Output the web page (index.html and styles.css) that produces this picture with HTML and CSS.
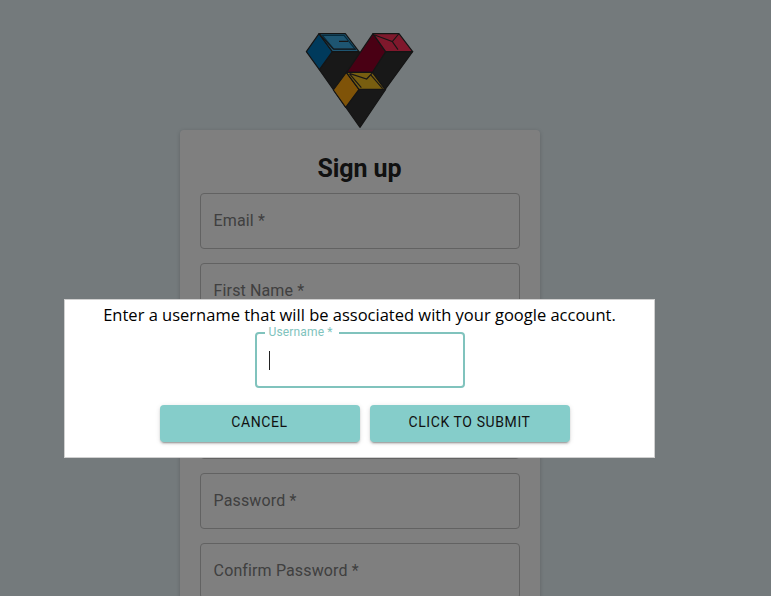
FILE: index.html
```html
<!DOCTYPE html>
<html lang="en">
<head>
<meta charset="utf-8">
<title>Sign up</title>
<link rel="stylesheet" href="styles.css">
</head>
<body>
<main class="page">
  <svg class="logo" viewBox="30 30 327 291" aria-hidden="true">
    <g stroke="#292929" stroke-width="3.5" stroke-linejoin="round">
      <path fill="#303030" d="M112 89H192L235 150L272 202L195 316L73 143Z"/>
      <path fill="#303030" d="M272 89H353L270 203L232 150Z"/>
      <path fill="#0074b8" d="M72 35L112 89L73 143L34 89Z"/>
      <path fill="#3cabe2" d="M72 35H151L192 89H112Z"/>
      <path fill="#930028" d="M234 35L272 89L232 151H155Z"/>
      <path fill="#ff3159" d="M234 35H312L353 89H272Z"/>
      <path fill="#ffa610" d="M154 151L192 202L152 256L115 204Z"/>
      <path fill="#f1bd20" d="M154 151H232L270 202H192Z"/>
    </g>
    <g fill="none" stroke="#302b2b" stroke-width="3.5">
      <path stroke="#0d567a" d="M82 40H147L181 82H117Z"/>
      <path d="M132 58H159M72 35L115 81H182"/>
      <path d="M239 39L292 59L311 36M292 59L309 83"/>
      <path d="M163 155L199 197M165 155L215 171L232 153M226 157L263 200"/>
    </g>
  </svg>
  <section class="card">
    <h1 class="title">Sign up</h1>
    <form class="fields">
      <label class="field">Email *</label>
      <label class="field">First Name *</label>
      <label class="field"></label>
      <label class="field"></label>
      <label class="field">Password *</label>
      <label class="field">Confirm Password *</label>
    </form>
  </section>
</main>
<div class="overlay">
  <section class="modal" role="dialog">
    <p class="message">Enter a username that will be associated with your google account.</p>
    <fieldset class="username">
      <legend class="caption">Username *</legend>
      <span class="caret"></span>
    </fieldset>
    <div class="actions">
      <button class="button" type="button">Cancel</button>
      <button class="button" type="button">Click to submit</button>
    </div>
  </section>
</div>
</body>
</html>
```
FILE: styles.css
```css
* { box-sizing: border-box; }
body {
  margin: 0;
  height: 596px;
  overflow: hidden;
  background: #e8f4f8;
  font-family: Roboto, sans-serif;
}
.page {
  height: 596px;
  overflow: hidden;
  display: flex;
  flex-direction: column;
  align-items: center;
  padding: 32px 51px 0 0;
}
.logo {
  width: 109px;
  height: 97px;
  flex: none;
  margin: 0 1.5px 1px 0;
}
.card {
  width: 360px;
  height: 520px;
  flex: none;
  padding: 21px 20px 20px;
  background: #fff;
  border-radius: 4px;
  box-shadow: 0 1px 4px rgba(0, 0, 0, .18);
}
.title {
  margin: 0 1px 6px 0;
  font-size: 25px;
  line-height: 36px;
  font-weight: 700;
  letter-spacing: -.1px;
  text-align: center;
  color: #222;
}
.fields {
  display: flex;
  flex-direction: column;
  gap: 14px;
}
.field {
  height: 56px;
  flex: none;
  padding: 0 12.6px;
  border: 1px solid #c4c4c4;
  border-radius: 4px;
  font-size: 16px;
  line-height: 53px;
  letter-spacing: .13px;
  color: #808080;
}
.overlay {
  position: fixed;
  inset: 0;
  padding: 299px 0 0 64px;
  background: rgba(0, 0, 0, .5);
}
.modal {
  width: 591px;
  height: 159px;
  display: flex;
  flex-direction: column;
  align-items: center;
  padding: 3px 0 0;
  background: #fff;
  border: 1px solid #d0d0d0;
}
.message {
  margin: 0;
  font-family: "Open Sans", sans-serif;
  font-size: 16.5px;
  line-height: 24px;
  white-space: nowrap;
  color: #000;
}
.username {
  width: 210px;
  height: 61px;
  margin: 0;
  padding: 0 12px;
  border: 2px solid #80c3bd;
  border-radius: 4px;
}
.caption {
  margin-left: -4px;
  padding: 0 6px 0 4px;
  font-size: 12px;
  line-height: 11px;
  letter-spacing: .16px;
  color: #80c3bd;
}
.caret {
  display: block;
  width: 1px;
  height: 19px;
  margin-top: 13px;
  background: #222;
}
.actions {
  display: flex;
  gap: 10px;
  margin: 17px 0 0 10px;
}
.button {
  width: 200px;
  height: 37px;
  padding: 0 0 4px;
  border: 0;
  border-radius: 4px;
  background: #85cdca;
  box-shadow: 0 3px 1px -2px rgba(0, 0, 0, .2), 0 2px 2px rgba(0, 0, 0, .14), 0 1px 5px rgba(0, 0, 0, .12);
  font: 400 14px/24px Roboto, sans-serif;
  letter-spacing: .6px;
  text-transform: uppercase;
  color: #111;
}
```
